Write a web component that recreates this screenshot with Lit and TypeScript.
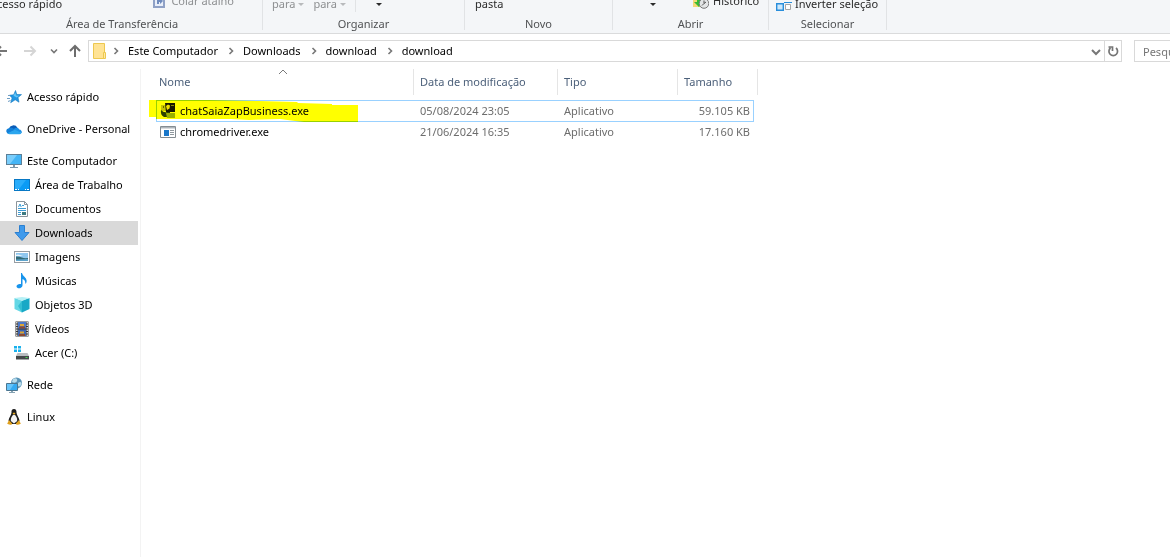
import { LitElement, html, css, svg, nothing } from "lit";
import { customElement, state } from "lit/decorators.js";

const icons: Record<string, unknown> = {
  star: svg`<path d="M9.500 1.500l1.300 4 4.700.1-3.500 2.900 1 4.700-3.800-2.400-4.500 2.900 1.400-4.800-2.600-2.700 4.200-.4z" fill="#2196e3" stroke="#1678be" stroke-width=".6"/><path d="M9.300 3.500l.9 3 2.900.3-2.400 1.700-3.200-1.700z" fill="#63c6f7"/><path d="M1 9.500h3M2 12.500l2.500-1M2 6.500h2" stroke="#6d9dc4" stroke-width="1"/>`,
  cloud: svg`<path d="M3 8a4.500 4.500 0 0 1 8.400-1.200L8 10z" fill="#0a5cb8"/><path d="M2.800 7.200C5 6.300 7 7 9 8.500L3 13A3.100 3.100 0 0 1 .3 10.500a3.200 3.200 0 0 1 2.500-3.300z" fill="#1380d8"/><path d="M7.500 8.500c1.600-2.400 5-2.200 5.700 0A2.700 2.700 0 0 1 15.700 12L9 10z" fill="#1a8fe6"/><path d="M1.500 12.300L8.800 8.700l6.800 3.100a2.500 2.500 0 0 1-2.300 1.500H3.600c-.8 0-1.500-.4-2.100-1z" fill="#2ba6ee"/>`,
  pc: svg`<rect x=".5" y="1.500" width="15" height="10" fill="#43b4f5" stroke="#5c7f97"/><path d="M1 2h10L4 11H1z" fill="#79cdfb"/><path d="M7 12h2v2h3v1H4v-1h3z" fill="#7c98aa"/>`,
  desktop: svg`<rect x=".5" y="2.500" width="15" height="11" fill="#0a9bf5" stroke="#0878c4"/><path d="M1 3h11L5 12H1z" fill="#29adfb"/><path d="M1 12.500h2m1 0h1m6 0h1m1 0h2" stroke="#fff"/>`,
  doc: svg`<path d="M2.500.5h8l3 3v12h-11z" fill="#fff" stroke="#8b959c"/><path d="M10.500.5v3h3" fill="none" stroke="#8b959c"/><path d="M4.500 6l1.500-3 1.200 3M8 4.500h2M4 7.500h8M4 9.500h8M4 11.500h3M4 13.500h3" stroke="#3d9bd3" fill="none"/><path d="M8 11h4v3H8z" fill="#3e7a80"/>`,
  down: svg`<path d="M5.500.5h5v7h4.500L8 15.500 1 7.500h4.500z" fill="#3f9aec" stroke="#2b7fd0"/>`,
  image: svg`<rect x=".5" y="2.500" width="15" height="11" fill="#fff" stroke="#969da3"/><path d="M2 4h12v8H2z" fill="#8fc7ef"/><path d="M2 6q2-1 4 0l3 1H2z" fill="#e8f4fb"/><path d="M2 7.500q4 0 6 1t6 .5v2H2z" fill="#336b76"/><path d="M2 10.500l12-.5v2H2z" fill="#5da3cb"/>`,
  music: svg`<path d="M7 0h1c.5 3.500 5.500 4.500 4.500 9-.2 1-.8 1.700-1.200 2 .4-3-1.300-4.500-2.800-5V12.500C8.300 15.500 3 16.500 2.500 13.600c-.2-2 2.500-3.200 4.500-2.500z" fill="#1794ec"/>`,
  cube: svg`<path d="M8 3.500L15.500 1v11L8 15.500z" fill="#19a8c6"/><path d="M8 3.500L.5 1v11L8 15.500z" fill="#64d7e5"/><path d="M.5 1L8 0l7.500 1L8 4z" fill="#b6f0f5"/><path d="M8 3.800L4 9l4 6.500z" fill="#34bdd2"/>`,
  film: svg`<path d="M1.500.5h13v15h-13z" fill="#363636"/><path d="M4 1h8v6.500H4z" fill="#4c78c8"/><path d="M4 8.500h8V15H4z" fill="#3f68b3"/><path d="M5 5.500h6v2H5zM5 13h6v2H5z" fill="#8c4931"/><path d="M6 3h4v2H6zM6 10.500h4v2H6z" fill="#dda634"/><path d="M2.800 1v14M13.200 1v14" stroke="#fff" stroke-width="1.200" stroke-dasharray="1.500 1"/>`,
  drive: svg`<path d="M0 1h3v2.500H0zm4 0h3v2.500H4zM0 4.500h3V7H0zm4 0h3V7H4z" fill="#19b1ed"/><path d="M3.500 8h10l1.500 3H2z" fill="#b9bdc0"/><path d="M2 11h13v3.500H2z" fill="#45484a"/><path d="M11.500 12.500h2" stroke="#45d850"/>`,
  net: svg`<circle cx="10.500" cy="6" r="5.500" fill="#5993b7"/><path d="M7 2c3-2 5 0 4 2S8 6 6 5zM12 6c2-2 4-1 3.500 1S13 10 12 9z" fill="#b7dbea"/><path d="M.5 6.500h11v7H.5z" fill="#35aaf2" stroke="#4c7690"/><path d="M1 7h7l-4 6H1z" fill="#66c4fa"/><path d="M5 14h2v1h2v1H3v-1h2z" fill="#86a2b2"/>`,
  tux: svg`<path d="M8 0c-2 0-2.700 1.500-2.500 3.500C5.500 6 3 8 2.500 11.500L5 15h6l2.500-3.500C13 8 10.500 6 10.500 3.500 10.500 1.500 10 0 8 0z" fill="#1d1d1d"/><path d="M8 5.500C6 6.500 4.500 9 4.800 12L8 14.500l3.200-2.500C11.500 9 10 6.500 8 5.500z" fill="#f4f4f4"/><path d="M6.500 4.300L8 3.500l1.500.8L8 5.700z" fill="#eeb020"/><path d="M3 11l3.200 3.500c-.4 1.800-2.500 1.300-5 .3zM13 11l-3.200 3.500c.4 1.800 2.500 1.300 5 .3z" fill="#e0a01c"/>`,
  zap: svg`<path d="M1 2h6v6H1z" fill="#c5c5a0"/><path d="M5 0h10v9H6z" fill="#16180f"/><path d="M6 3l2-1.500 2 1L9.500 5.500 7 7z" fill="#f0e060"/><path d="M1 7q3 3 6 2h3v5H4q-4-2-3-7z" fill="#2d421c"/><path d="M6 10h9v5H7z" fill="#9ab070"/><path d="M11 2h3v1h-3z" fill="#888"/><path d="M3 3h1v2H3z" fill="#666"/>`,
  exe: svg`<path d="M.5 2.500h15v11H.5z" fill="#fff" stroke="#848c92"/><path d="M1 3h14v1.500H1z" fill="#aeb5ba"/><path d="M4 6h5v6H4z" fill="#1977c9"/><path d="M10 6.500h4M10 8.500h4M10 10.500h4" stroke="#8f989e"/>`,
  folder: svg`<path d="M1.500.5h11v15h-11z" fill="#ffe394" stroke="#edc84f"/><path d="M11.500 9.500h2v6h-2z" fill="#ffe9a8" stroke="#edc84f"/>`,
  back: svg`<path d="M15 8H4M9 3.500L4.500 8 9 12.500" fill="none" stroke="#757575" stroke-width="2"/>`,
  forward: svg`<path d="M2 8h11M8.500 3.500L13 8l-4.500 4.500" fill="none" stroke="#d5d5d5" stroke-width="2"/>`,
  up: svg`<path d="M8 14V3M3 8l5-5 5 5" fill="none" stroke="#6d6d6d" stroke-width="2"/>`,
  chevDown: svg`<path d="M5 6.500l3 3 3-3" fill="none" stroke="#777" stroke-width="1.600"/>`,
  chevBold: svg`<path d="M4 7l4 4 4-4" fill="none" stroke="#777" stroke-width="2"/>`,
  chevRight: svg`<path d="M6.500 5l3 3-3 3" fill="none" stroke="#777" stroke-width="1.600"/>`,
  refresh: svg`<path d="M11 5a4.300 4.300 0 1 1-5.500 0M3.500 4h4v4" fill="none" stroke="#757575" stroke-width="1.700"/>`,
  caret: svg`<path d="M5 7h6l-3 3z" fill="currentColor"/>`,
  shortcut: svg`<path d="M2 1h12v14H2z" fill="#8fa1c6"/><path d="M4 3h8v10H4z" fill="#e8eef9"/><path d="M6 11V7h3V4.500L12 8l-3 3V9H8v2z" fill="#6f8bbd"/>`,
  history: svg`<path d="M0 0h8v14H0z" fill="#f3d976"/><path d="M4 4h4v5h2l-4 5-5-5h3z" fill="#35bb33"/><circle cx="11" cy="10.500" r="4.800" fill="#e3e5e6" stroke="#777"/><path d="M11 7.500v3l2-1.500M11 10.500l-2 2" stroke="#555" fill="none"/>`,
  invert: svg`<path d="M.7 7.700h6.600v6.600H.7z" fill="#cde8fb" stroke="#298edb" stroke-width="1.400"/><path d="M9.500 8.500h5v5h-5z" fill="#fff" stroke="#a5a5a5"/><path d="M8 6.500h8" stroke="#298edb"/>`,
};

const icon = (name: string, cls = "") =>
  html`<svg class="icon ${cls}" viewBox="0 0 16 16" aria-hidden="true">${icons[name]}</svg>`;

interface Place { label: string; icon: string; child?: boolean }

const places: Place[] = [
  { label: "Acesso rápido", icon: "star" },
  { label: "OneDrive - Personal", icon: "cloud" },
  { label: "Este Computador", icon: "pc" },
  { label: "Área de Trabalho", icon: "desktop", child: true },
  { label: "Documentos", icon: "doc", child: true },
  { label: "Downloads", icon: "down", child: true },
  { label: "Imagens", icon: "image", child: true },
  { label: "Músicas", icon: "music", child: true },
  { label: "Objetos 3D", icon: "cube", child: true },
  { label: "Vídeos", icon: "film", child: true },
  { label: "Acer (C:)", icon: "drive", child: true },
  { label: "Rede", icon: "net" },
  { label: "Linux", icon: "tux" },
];

const files = [
  { name: "chatSaiaZapBusiness.exe", date: "05/08/2024 23:05", type: "Aplicativo", size: "59.105 KB", icon: "zap", marked: true },
  { name: "chromedriver.exe", date: "21/06/2024 16:35", type: "Aplicativo", size: "17.160 KB", icon: "exe", marked: false },
];

const base = css`
  :host { display: block; }
  * { box-sizing: border-box; }
  button, input { font: inherit; color: inherit; background: none; border: 0; margin: 0; padding: 0; }
  a { color: inherit; text-decoration: none; }
  .icon { width: 16px; height: 16px; flex: none; display: block; }
`;

@customElement("ribbon-bar")
export class RibbonBar extends LitElement {
  static styles = [base, css`
    .ribbon { display: flex; height: 34px; overflow: hidden; background: #f4f6f8; border-bottom: 1px solid #dadbdc; }
    .group { flex: none; display: flex; flex-direction: column; justify-content: flex-end; height: 30px; border-right: 1px solid #e1e3e5; }
    .clip { width: 263px; }
    .organize { width: 202px; }
    .new { width: 148px; }
    .open { width: 156px; }
    .select { width: 118px; }
    .tools { display: flex; align-items: center; height: 16px; margin-bottom: 6px; color: #2b2b2b; }
    .tools button { display: flex; align-items: center; white-space: nowrap; line-height: 16px; }
    .label { height: 12px; line-height: 12px; text-align: center; color: #505254; }
    .clip .label { padding-right: 18px; }
    .clip .tools { justify-content: space-between; padding-right: 28px; margin-left: -10px; }
    .dim { color: #8d8f91; }
    .with-icon { gap: 4px; align-self: flex-start; margin-top: -3px; }
    .organize .tools { padding-left: 9px; }
    .organize .dim + .dim { margin-left: 4px; }
    .dim .icon { margin-left: -2px; color: #b8babc; }
    .rule { width: 1px; height: 16px; background: #e1e3e5; margin-left: 4px; }
    .more { margin-left: 15px; }
    .new .tools { padding-left: 10px; }
    .open .tools { padding-left: 32px; }
    .open .with-icon { margin-left: 32px; }
    .select .tools { padding-left: 7px; }
    .select .with-icon { gap: 3px; }
  `];
  render() {
    return html`<div class="ribbon">
      <div class="group clip">
        <div class="tools"><button>Acesso rápido</button><button class="dim with-icon">${icon("shortcut")}Colar atalho</button></div>
        <div class="label">Área de Transferência</div>
      </div>
      <div class="group organize">
        <div class="tools"><button class="dim">para${icon("caret")}</button><button class="dim">para${icon("caret")}</button><span class="rule"></span><button class="more" aria-label="Excluir">${icon("caret")}</button></div>
        <div class="label">Organizar</div>
      </div>
      <div class="group new">
        <div class="tools"><button>pasta</button></div>
        <div class="label">Novo</div>
      </div>
      <div class="group open">
        <div class="tools"><button aria-label="Propriedades">${icon("caret")}</button><button class="with-icon">${icon("history")}Histórico</button></div>
        <div class="label">Abrir</div>
      </div>
      <div class="group select">
        <div class="tools"><button class="with-icon">${icon("invert")}Inverter seleção</button></div>
        <div class="label">Selecionar</div>
      </div>
    </div>`;
  }
}

@customElement("address-bar")
export class AddressBar extends LitElement {
  static styles = [base, css`
    .bar { display: flex; align-items: center; height: 34px; overflow: hidden; }
    .nav { flex: none; display: flex; align-items: center; width: 88px; }
    .nav button:nth-child(1) { margin-left: -8px; }
    .nav button:nth-child(2) { margin-left: 14px; }
    .nav button:nth-child(3) { margin-left: 8px; }
    .nav button:nth-child(4) { margin-left: 5px; }
    .field { flex: 1; display: flex; align-items: center; height: 22px; border: 1px solid #d9d9d9; padding-left: 3px; }
    .crumbs { flex: 1; display: flex; align-items: center; }
    .crumbs .sep { margin: 0 4px 0 5px; }
    .crumbs .sep:first-child { margin-left: 0; }
    .refresh { align-self: stretch; display: flex; align-items: center; border-left: 1px solid #d9d9d9; }
    .search { flex: none; width: 36px; height: 22px; margin-left: 12px; border: 1px solid #d9d9d9; border-right: 0; padding-left: 8px; border-radius: 0; outline: none; }
    .search::placeholder { color: #757575; opacity: 1; }
  `];
  render() {
    return html`<div class="bar">
      <nav class="nav">
        <button aria-label="Voltar">${icon("back")}</button>
        <button aria-label="Avançar">${icon("forward")}</button>
        <button aria-label="Locais recentes">${icon("chevDown")}</button>
        <button aria-label="Acima">${icon("up")}</button>
      </nav>
      <div class="field">
        ${icon("folder")}
        <div class="crumbs">
          ${["Este Computador", "Downloads", "download", "download"].map(
            (c) => html`${icon("chevRight", "sep")}<a href="#">${c}</a>`
          )}
        </div>
        <button aria-label="Locais anteriores">${icon("chevBold")}</button>
        <button class="refresh" aria-label="Atualizar">${icon("refresh")}</button>
      </div>
      <input class="search" type="text" aria-label="Pesquisar" placeholder="Pesquisar download" />
    </div>`;
  }
}

@customElement("places-tree")
export class PlacesTree extends LitElement {
  @state() selected = "Downloads";
  static styles = [base, css`
    .tree { padding: 16px 2px 0 0; border-right: 1px solid #f3f3f3; height: 100%; }
    .place { display: flex; align-items: center; gap: 5px; height: 24px; padding-left: 6px; white-space: nowrap; }
    .place.root + .root, .place.child + .root { margin-top: 8px; }
    .child { padding-left: 14px; }
    .on { background: #d9d9d9; }
  `];
  render() {
    return html`<nav class="tree">
      ${places.map((p) => html`<a href="#" class="place ${p.child ? "child" : "root"} ${p.label === this.selected ? "on" : ""}"
        @click=${() => (this.selected = p.label)}>${icon(p.icon)}<span>${p.label}</span></a>`)}
    </nav>`;
  }
}

@customElement("file-list")
export class FileList extends LitElement {
  static styles = [base, css`
    :host { padding-left: 15px; }
    table { width: 602px; table-layout: fixed; border-collapse: separate; border-spacing: 0; }
    .c-name { width: 258px; }
    .c-date { width: 144px; }
    .c-type { width: 120px; }
    .c-size { width: 80px; }
    th { position: relative; height: 26px; padding: 0 0 0 6px; font-weight: 400; text-align: left; color: #4c607a; border-right: 1px solid #e5e5e5; }
    th:first-child { padding-left: 3px; }
    .sort { position: absolute; left: 122px; top: 0; width: 10px; height: 6px; }
    .gap td { height: 5px; padding: 0; }
    td { height: 22px; padding: 0 0 0 6px; color: #6d6d6d; white-space: nowrap; }
    td.name { position: relative; padding-left: 4px; color: #000; }
    .file { display: flex; align-items: center; gap: 4px; }
    .size { text-align: right; padding-right: 8px; }
    .focus { position: relative; }
    .focus::after { content: ""; position: absolute; inset: 0 4px 0 0; border: 1px solid #99d1ff; pointer-events: none; }
    .plain td { height: 20px; }
    .marker { position: absolute; left: -7px; top: -1px; width: 210px; height: 24px; mix-blend-mode: multiply; z-index: 1; pointer-events: none; }
  `];
  render() {
    return html`<table>
      <colgroup><col class="c-name" /><col class="c-date" /><col class="c-type" /><col class="c-size" /></colgroup>
      <thead><tr>
        <th scope="col">Nome<svg class="sort" viewBox="0 0 10 6" aria-hidden="true"><path d="M1 5l4-4 4 4" fill="none" stroke="#7a7a7a" /></svg></th>
        <th scope="col">Data de modificação</th><th scope="col">Tipo</th><th scope="col">Tamanho</th>
      </tr></thead>
      <tbody>
        <tr class="gap"><td colspan="4"></td></tr>
        ${files.map((f) => html`<tr class=${f.marked ? "focus" : "plain"}>
          <td class="name"><span class="file">${icon(f.icon)}${f.name}</span>
            ${f.marked ? html`<svg class="marker" viewBox="0 0 210 24" aria-hidden="true"><path d="M0 1h60l50 1 38 1 1 1 34 1v1h26v17h-54l-9-1-15-2-31 1-18-1H7v-2H0z" fill="#ff0" /></svg>` : nothing}
          </td>
          <td>${f.date}</td><td>${f.type}</td><td class="size">${f.size}</td>
        </tr>`)}
      </tbody>
    </table>`;
  }
}

@customElement("app-root")
export class AppRoot extends LitElement {
  static styles = [base, css`
    :host { display: flex; flex-direction: column; min-height: 100vh; overflow: hidden; background: #fff; color: #000; font: 11px/16px "Noto Sans", "Open Sans", sans-serif; }
    .body { flex: 1; display: grid; grid-template-columns: 141px minmax(0, 1fr); padding-top: 1px; }
  `];
  render() {
    return html`<ribbon-bar></ribbon-bar><address-bar></address-bar>
      <main class="body"><places-tree></places-tree><file-list></file-list></main>`;
  }
}
